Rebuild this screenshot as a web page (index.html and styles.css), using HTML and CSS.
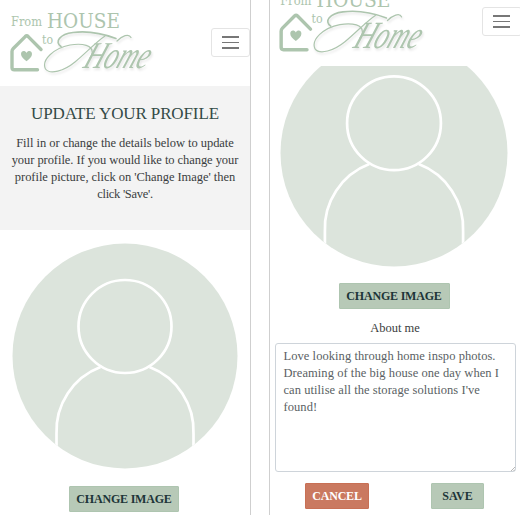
FILE: index.html
```html
<!DOCTYPE html>
<html lang="en">
<head>
<meta charset="utf-8">
<title>Update your profile</title>
<link rel="stylesheet" href="styles.css">
</head>
<body>
<svg class="defs" aria-hidden="true">
  <symbol id="logo" viewBox="0 0 160 80">
    <g class="logo-text">
      <text x="11" y="25.5" font-size="12.5" textLength="31" lengthAdjust="spacingAndGlyphs">From</text>
      <text x="47" y="27.5" font-size="20.5" textLength="73" lengthAdjust="spacingAndGlyphs">HOUSE</text>
      <text x="42" y="43.500" font-size="12.5" textLength="11" lengthAdjust="spacingAndGlyphs">to</text>
    </g>
    <path class="house" d="M41 49.5 28.2 36.6Q26.7 35.2 25.2 36.6L13.3 48.5Q12 49.8 12 51.5V67.5Q12 69.8 14.3 69.8H37.5"/>
    <path class="heart" d="M26.5 61.2C23.5 58.8 21 56.7 21 54c0-3.6 4.1-4 5.5-1.1C27.900 50 32 50.400 32 54c0 2.700-2.500 4.800-5.500 7.200z"/>
    <g class="script">
      <path class="swash bold" d="M116 38.500C104 34 88 30.500 73 32.500C60 34 54 42 61 46.500"/>
      <path class="swash" d="M117 41C122 36 129 33 131 37.500"/>
      <path class="swash" d="M105 36C96 42 86 53 75 62C64 71 50 75 45.500 69C41 60 54 48 70 45C82 43 94 45 92 54C91.500 56 91 57 90 58"/>
      <text transform="translate(82 68) skewX(-22)" font-size="38" textLength="64" lengthAdjust="spacingAndGlyphs">Home</text>
    </g>
  </symbol>
  <symbol id="avatar" viewBox="0 0 226 226">
    <clipPath id="disc"><circle cx="113" cy="113" r="112.500"/></clipPath>
    <circle class="disc" cx="113" cy="113" r="112.500"/>
    <g class="person" clip-path="url(#disc)">
      <path d="M44.500 210V191A68.500 68.500 0 0 1 88.500 124M137.500 124A68.500 68.500 0 0 1 181.500 191V210"/>
      <circle cx="113" cy="83.500" r="46.500"/>
    </g>
  </symbol>
</svg>
<main class="screens">
  <section class="screen first">
    <header class="bar">
      <svg class="logo"><use href="#logo"/></svg>
      <button class="toggle" aria-label="Menu"><i></i><i></i><i></i></button>
    </header>
    <div class="intro">
      <h1>UPDATE YOUR PROFILE</h1>
      <p>
        <span class="l1">Fill in or change the details below to update</span>
        <span class="l2">your profile. If you would like to change your</span>
        <span class="l3">profile picture, click on 'Change Image' then</span>
        <span class="l4">click 'Save'.</span>
      </p>
    </div>
    <svg class="avatar"><use href="#avatar"/></svg>
    <button class="btn change">CHANGE IMAGE</button>
  </section>
  <section class="screen second">
    <header class="bar">
      <svg class="logo"><use href="#logo"/></svg>
      <button class="toggle" aria-label="Menu"><i></i><i></i><i></i></button>
    </header>
    <div class="crop"><svg class="avatar"><use href="#avatar"/></svg></div>
    <button class="btn change">CHANGE IMAGE</button>
    <div class="label">About me</div>
    <div class="field">
      <span class="f1">Love looking through home inspo photos.</span>
      <span class="f2">Dreaming of the big house one day when I</span>
      <span class="f3">can utilise all the storage solutions I've</span>
      <span class="f4">found!</span>
      <svg class="grip" viewBox="0 0 4 4"><path d="M0 4 4 0M2.500 4 4 2.500"/></svg>
    </div>
    <div class="actions">
      <button class="btn cancel">CANCEL</button>
      <button class="btn save">SAVE</button>
    </div>
  </section>
</main>
</body>
</html>
```

FILE: styles.css
```css
* { box-sizing: border-box; }
body {
  margin: 0;
  background: #fff;
  color: #3a3d40;
  font: 12.5px/17px "Liberation Serif", serif;
  overflow: hidden;
}
.defs { position: absolute; width: 0; height: 0; }
.screens { display: flex; justify-content: space-between; height: 515px; }
.screen {
  width: 251px;
  height: 515px;
  overflow: hidden;
  display: flex;
  flex-direction: column;
  align-items: center;
}
.first { border-right: 1px solid #cfcfcf; }
.second { border-left: 1px solid #cfcfcf; }

.bar { display: flex; justify-content: space-between; width: 100%; flex: none; }
.first .bar { height: 86px; }
.second .bar { height: 66px; }
.logo { width: 160px; height: 80px; flex: none; }
.second .logo { margin: -21px 0 0 -1px; width: 162px; height: 81px; }
.logo-text { fill: #adc5ae; font-family: "DejaVu Serif", serif; font-weight: 400; }
.house { fill: none; stroke: #adc5ae; stroke-width: 3.4; stroke-linecap: round; }
.heart { fill: #adc5ae; }
.script { fill: #adc5ae; font-family: "Liberation Serif", serif; font-style: italic; filter: drop-shadow(1px 2px 1px rgba(0, 0, 0, .1)); }
.swash { fill: none; stroke: #adc5ae; stroke-width: 1.2; stroke-linecap: round; }
.bold { stroke-width: 1.6; }

.toggle {
  flex: none;
  width: 39px;
  height: 29px;
  margin: 28px 0 0;
  padding: 0;
  border: 1px solid #e4e4e4;
  border-radius: 3px;
  background: #fff;
  display: flex;
  flex-direction: column;
  align-items: center;
  justify-content: center;
  gap: 4px;
}
.toggle i { width: 17px; height: 1.500px; background: #777; }
.second .toggle { width: 40px; margin: 7px -2px 0 0; padding-right: 1px; }

.intro {
  width: 100%;
  height: 144px;
  padding: 17px 0 0;
  background: #f3f3f3;
  text-align: center;
  flex: none;
}
h1 {
  margin: 0 0 11px;
  font-size: 17px;
  line-height: 21px;
  font-weight: 400;
  letter-spacing: -.12px;
  color: #344b47;
  white-space: nowrap;
}
p { margin: 0; }
p span, .field span { display: block; white-space: nowrap; }
.l1 { letter-spacing: -.04px; }
.l2 { letter-spacing: -.06px; }
.l3 { letter-spacing: -.04px; }
.l4 { letter-spacing: -.3px; }

.avatar { display: block; flex: none; width: 226px; height: 226px; }
.first .avatar { margin: 13px 0 17px -1px; }
.crop { width: 228px; height: 201px; overflow: hidden; flex: none; margin-left: -2px; }
.crop .avatar { width: 228px; height: 228px; margin-top: -27px; }
.disc { fill: #dce4dc; }
.person { fill: none; stroke: #fff; stroke-width: 2.7; }

.btn {
  flex: none;
  height: 26px;
  padding: 0;
  border: 1px solid #aec5b0;
  border-radius: 1px;
  background: #b7c9b7;
  color: #1d3538;
  font: 700 12px/24px "Liberation Serif", serif;
  letter-spacing: -.2px;
  text-align: center;
  white-space: nowrap;
}
.change { width: 110px; margin-left: -2px; }
.second .change { width: 111px; margin-top: 16px; margin-left: -2px; }
.label { margin-top: 11px; height: 17px; }
.field {
  position: relative;
  width: 241px;
  height: 129px;
  margin-top: 6px;
  padding: 4px 8px;
  border: 1px solid #ced4da;
  border-radius: 3px;
  color: #5a5f64;
  flex: none;
}
.f1, .f2, .f3, .f4 { letter-spacing: .06px; }
.grip { position: absolute; right: 0; bottom: 0; width: 4px; height: 4px; stroke: #888; stroke-width: .6; }
.actions { display: flex; justify-content: space-between; width: 179px; margin: 11px 0 0 -1px; }
.cancel { width: 64px; background: #ca7960; border-color: #c87055; color: #fff; }
.save { width: 53px; letter-spacing: 0; }
```
